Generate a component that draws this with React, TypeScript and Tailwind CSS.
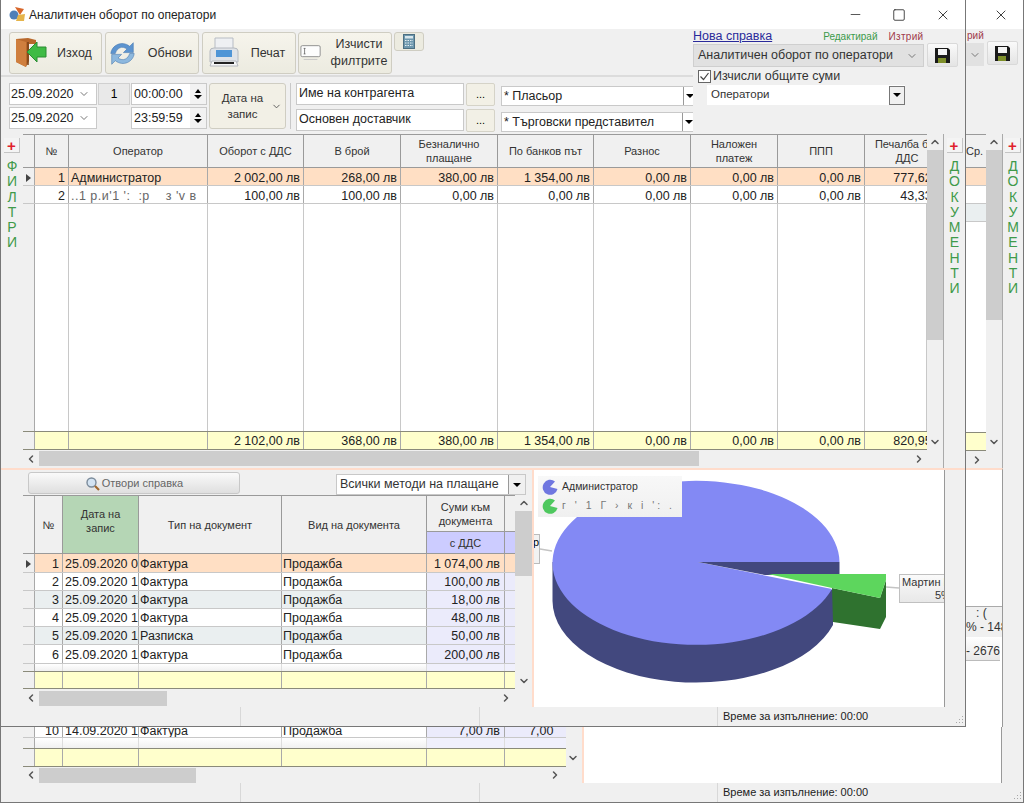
import { ChevronDown, ChevronLeft, ChevronRight, ChevronUp, Minus, Square, X } from "lucide-react";
import type { ReactNode } from "react";

const topCols = "grid grid-cols-[12px_34px_139px_96px_97px_97px_96px_97px_87px_87px_62px]";
const lowCols = "grid grid-cols-[12px_28px_76px_143px_145px_78px_10px]";
const backCols = "grid grid-cols-[12px_28px_76px_143px_145px_78px_61px]";

const topHeaders = ["Оборот с ДДС", "В брой", "Безналично плащане", "По банков път", "Разнос", "Наложен платеж", "ППП"];

const topRows = [
  { n: 1, name: "Администратор", vals: ["2 002,00 лв", "268,00 лв", "380,00 лв", "1 354,00 лв", "0,00 лв", "0,00 лв", "0,00 лв"], last: "777,62 лв" },
  { n: 2, name: "..1 р.и'1 ':  :р    з 'v в", vals: ["100,00 лв", "100,00 лв", "0,00 лв", "0,00 лв", "0,00 лв", "0,00 лв", "0,00 лв"], last: "43,33 лв" },
];
const topTotals = ["2 102,00 лв", "368,00 лв", "380,00 лв", "1 354,00 лв", "0,00 лв", "0,00 лв", "0,00 лв"];

const docRows = [
  { n: 1, date: "25.09.2020 00:00", type: "Фактура", sum: "1 074,00 лв" },
  { n: 2, date: "25.09.2020 10:12", type: "Фактура", sum: "100,00 лв" },
  { n: 3, date: "25.09.2020 11:05", type: "Фактура", sum: "18,00 лв" },
  { n: 4, date: "25.09.2020 12:40", type: "Фактура", sum: "48,00 лв" },
  { n: 5, date: "25.09.2020 14:21", type: "Разписка", sum: "50,00 лв" },
  { n: 6, date: "25.09.2020 16:33", type: "Фактура", sum: "200,00 лв" },
];

function Tri() {
  return <span className="block w-0 h-0 border-x-[4px] border-t-[4px] border-x-transparent border-t-black" />;
}

function Cell({ className = "", children }: { className?: string; children?: ReactNode }) {
  return (
    <div className={`h-full min-w-0 overflow-hidden whitespace-nowrap flex items-center border-r border-[#a9a9a9] ${className}`}>
      {children}
    </div>
  );
}

function HeadCell({ className = "", children }: { className?: string; children?: ReactNode }) {
  return (
    <div className={`h-full min-w-0 overflow-hidden flex items-center justify-center text-center text-[11px] leading-[14px] text-[#333] border-r border-[#9a9a9a] px-1 ${className}`}>
      {children}
    </div>
  );
}

function Letters({ word }: { word: string }) {
  return (
    <div className="flex flex-col items-center text-[14px] leading-[15.3px] text-[#3f9a4a] mt-[6px]">
      {word.split("").map((c, i) => (
        <span key={i}>{c}</span>
      ))}
    </div>
  );
}

function SideStrip({ word, className = "" }: { word: string; className?: string }) {
  return (
    <div className={`flex flex-col items-center bg-[#f0f0f0] pt-[4px] ${className}`}>
      <div className="w-[16px] h-[15px] flex items-center justify-center bg-[#f4f4f4] border-b border-r border-[#c4c4c4] text-[#e0202c] text-[15px] leading-none font-bold">
        +
      </div>
      <Letters word={word} />
    </div>
  );
}

function VScroll({ thumb, className = "" }: { thumb: string; className?: string }) {
  return (
    <div className={`w-[16px] shrink-0 flex flex-col items-center bg-[#f0f0f0] relative ${className}`}>
      <ChevronUp size={12} strokeWidth={3} className="text-[#555] mt-[2px]" />
      <div className={`w-full bg-[#cdcdcd] mt-[2px] ${thumb}`} />
      <div className="flex-1" />
      <ChevronDown size={12} strokeWidth={3} className="text-[#555] mb-[2px]" />
    </div>
  );
}

function HScroll({ thumb, className = "" }: { thumb: string; className?: string }) {
  return (
    <div className={`flex items-center bg-[#f0f0f0] ${className}`}>
      <ChevronLeft size={12} strokeWidth={3} className="text-[#555] mx-[2px] shrink-0" />
      <div className={`h-[15px] bg-[#cdcdcd] shrink-0 ${thumb}`} />
      <div className="flex-1" />
      <ChevronRight size={12} strokeWidth={3} className="text-[#555] mx-[2px] shrink-0" />
    </div>
  );
}

function StatusBar() {
  return (
    <div className="h-[19px] flex bg-[#f0f0f0] text-[11px] text-[#222] shrink-0">
      <div className="w-[240px] border-r border-[#d8d8d8]" />
      <div className="w-[239px] border-r border-[#d8d8d8]" />
      <div className="w-[238px] border-r border-[#d8d8d8]" />
      <div className="flex-1 flex items-center pl-[5px] justify-between">
        <span>Време за изпълнение: 00:00</span>
        <svg width="10" height="10" viewBox="0 0 10 10" className="self-end mr-[1px] mb-[1px]">
          <path d="M8 1h1v1H8zM5 4h1v1H5zM8 4h1v1H8zM2 7h1v1H2zM5 7h1v1H5zM8 7h1v1H8z" fill="#a8a8a8" />
        </svg>
      </div>
    </div>
  );
}

function DoorIcon() {
  return (
    <svg width="34" height="32" viewBox="0 0 34 32">
      <path d="M2 2 L14 1 L22 3 L22 7 L15 7 L15 24 L12 30 L2 25 Z" fill="#b8682c" />
      <path d="M2 2 L12 5 L12 30 L2 25 Z" fill="#cf7f3e" />
      <path d="M14 5 L14 28" stroke="#7a4015" strokeWidth="1.5" />
      <path d="M13 15 L23 5 L23 10 L32 10 L32 20 L23 20 L23 25 Z" fill="#3fbb45" stroke="#2b8c33" strokeWidth="1" />
    </svg>
  );
}

function RefreshIcon() {
  return (
    <svg width="27" height="27" viewBox="0 0 30 30">
      <path d="M2 15 C3 6 14 0 23 7 L27 3 L27 14 L16 14 L20 10 C14 6 9 9 7 15 Z" fill="#5d94cf" stroke="#3f74ad" strokeWidth="0.6" />
      <path d="M28 15 C27 24 16 30 7 23 L3 27 L3 16 L14 16 L10 20 C16 24 21 21 23 15 Z" fill="#8db8de" stroke="#3f74ad" strokeWidth="0.6" />
    </svg>
  );
}

function PrinterIcon() {
  return (
    <svg width="32" height="32" viewBox="0 0 32 32">
      <path d="M7 1 H25 V13 H7 Z" fill="#eef0f3" stroke="#b7bcc4" />
      <path d="M2 14 Q2 11 6 11 H26 Q30 11 30 14 V25 H2 Z" fill="#dfe3e8" stroke="#b4b8be" />
      <path d="M8 13 H24 V20 H8 Z" fill="#4f95d6" />
      <path d="M4 24 H28 L30 29 H2 Z" fill="#f5f6f7" stroke="#b4b8be" />
      <path d="M6 25 H26 V27 H6 Z" fill="#222" />
    </svg>
  );
}

function ClearIcon() {
  return (
    <svg width="22" height="20" viewBox="0 0 24 20">
      <rect x="1" y="2" width="21" height="12" rx="1.5" fill="#fdfdfd" stroke="#8a8a8a" />
      <path d="M5 5 V11 M4 5 H6 M4 11 H6" stroke="#555" strokeWidth="0.8" />
      <path d="M4 17 H19" stroke="#c4c4c4" />
    </svg>
  );
}

function CalcIcon() {
  return (
    <svg width="12" height="15" viewBox="0 0 12 15">
      <rect x="0.5" y="0.5" width="11" height="14" fill="#6d97ad" stroke="#4d6f82" />
      <rect x="2" y="2" width="8" height="2.5" fill="#d8e6ec" />
      <path d="M2 6.5 H10 M2 9 H10 M2 11.5 H10" stroke="#e4edf1" strokeWidth="1" strokeDasharray="1.5 1" />
    </svg>
  );
}

function SaveButton({ className = "" }: { className?: string }) {
  return (
    <div className={`h-[24px] flex items-center justify-center rounded-[2px] border border-[#d9d9d9] bg-gradient-to-b from-[#fafafa] to-[#e4e4e4] ${className}`}>
      <svg width="15" height="15" viewBox="0 0 15 15">
        <path d="M0 0 H13 L15 2 V15 H0 Z" fill="#1a1a1a" />
        <rect x="3" y="1" width="9" height="6" fill="#f4f4f4" />
        <rect x="3" y="10" width="8" height="5" fill="#7e8f2a" />
      </svg>
    </div>
  );
}

function ToolButton({ icon, label, iconBox, labelBox = "", className = "" }: { icon: ReactNode; label: ReactNode; iconBox: string; labelBox?: string; className?: string }) {
  return (
    <div className={`h-[42px] shrink-0 flex items-center rounded-[3px] border border-[#cfcdc2] bg-gradient-to-b from-[#f6f4ec] to-[#ecebe0] text-[12.5px] text-[#333] ${className}`}>
      <div className={`shrink-0 flex items-center justify-center ${iconBox}`}>{icon}</div>
      <div className={`flex-1 text-center leading-[17px] whitespace-nowrap ${labelBox}`}>{label}</div>
    </div>
  );
}

function Field({ className = "", children }: { className?: string; children?: ReactNode }) {
  return (
    <div className={`shrink-0 bg-white border border-[#c9c9c9] flex items-center text-[12.5px] text-[#222] whitespace-nowrap overflow-hidden ${className}`}>
      {children}
    </div>
  );
}

function DateRow({ date, time, num }: { date: string; time: string; num?: string }) {
  return (
    <div className="flex h-[22px]">
      <Field className="w-[88px] pl-[1px] justify-between pr-[6px]">
        {date}
        <ChevronDown size={12} className="text-[#777]" />
      </Field>
      <div className={`w-[32px] shrink-0 ml-[1px] text-center text-[12px] leading-[21px] ${num ? "bg-[#e9e9e9] border border-[#d0d0d0]" : ""}`}>{num}</div>
      <Field className="w-[76px] ml-[1px] pl-[2px] justify-between">
        {time}
        <div className="w-[16px] h-full flex flex-col items-center justify-center gap-[2px] bg-[#f2f2f2]">
          <span className="w-0 h-0 border-x-[3px] border-b-[4px] border-x-transparent border-b-black" />
          <Tri />
        </div>
      </Field>
    </div>
  );
}

function FilterBar() {
  return (
    <div className="flex pl-[8px] pt-[6px] h-[59px] border-t-2 border-[#dcdcdc]">
      <div className="flex flex-col gap-[2px] shrink-0">
        <DateRow date="25.09.2020" time="00:00:00" num="1" />
        <DateRow date="25.09.2020" time="23:59:59" />
      </div>
      <div className="w-[77px] h-[46px] shrink-0 ml-[2px] flex items-center rounded-[3px] border border-[#cfcdc2] bg-[#f2f0e6] text-[11.5px] leading-[16px] text-[#333]">
        <span className="flex-1 text-center pl-[4px]">Дата на запис</span>
        <ChevronDown size={11} className="text-[#555] mr-[3px] shrink-0" />
      </div>
      <div className="w-px h-[46px] shrink-0 bg-[#c8c8c8] ml-[4px]" />
      <div className="flex flex-col ml-[5px] gap-[3px] shrink-0">
        <div className="flex">
          <Field className="w-[168px] h-[22px] pl-[2px] pb-[2px]">Име на контрагента</Field>
          <div className="w-[29px] h-[23px] ml-[2px] rounded-[2px] bg-[#f2f0e6] border border-[#d5d3c8] text-center text-[11px] leading-[20px]">...</div>
        </div>
        <div className="flex">
          <Field className="w-[168px] h-[22px] pl-[2px] pb-[2px]">Основен доставчик</Field>
          <div className="w-[29px] h-[23px] ml-[2px] rounded-[2px] bg-[#f2f0e6] border border-[#d5d3c8] text-center text-[11px] leading-[20px]">...</div>
        </div>
      </div>
      <div className="flex flex-col ml-[6px] pt-[3px] gap-[6px] shrink-0">
        <Field className="w-[196px] h-[20px] pl-[2px] justify-between">
          * Пласьор
          <span className="w-[12px] h-full flex items-center justify-center border-l border-[#999] shrink-0 mr-[1px]"><Tri /></span>
        </Field>
        <Field className="w-[196px] h-[20px] pl-[2px] justify-between">
          * Търговски представител
          <span className="w-[12px] h-full flex items-center justify-center border-l border-[#999] shrink-0 mr-[2px]"><Tri /></span>
        </Field>
      </div>
    </div>
  );
}

function ReportPanel() {
  return (
    <div className="w-[272px] shrink-0 bg-[#f0f0f0] relative z-10">
      <div className="flex items-baseline h-[14px] leading-[14px]">
        <span className="text-[12.5px] text-[#2a2a9a] underline">Нова справка</span>
        <span className="ml-[51px] text-[10px] text-[#3c9a4a]">Редактирай</span>
        <span className="ml-[11px] text-[10px] tracking-[0.3px] text-[#a03a4a]">Изтрий</span>
      </div>
      <div className="flex items-start">
        <div className="w-[231px] h-[23px] mt-[1px] flex items-center justify-between pl-[4px] pr-[5px] bg-[#e1e1e1] border border-[#cfcfcf] text-[12.5px] text-[#333]">
          Аналитичен оборот по оператори
          <ChevronDown size={12} className="text-[#777]" />
        </div>
        <SaveButton className="w-[31px] ml-[3px]" />
      </div>
      <div className="flex items-center ml-[5px] mt-[2px] h-[15px] text-[12.5px] text-[#333]">
        <svg width="13" height="13" viewBox="0 0 13 13" className="mr-[2px]">
          <rect x="0.5" y="0.5" width="12" height="12" fill="#fff" stroke="#666" />
          <path d="M2.5 6.5 L5.5 9.5 L10.5 3" fill="none" stroke="#444" strokeWidth="1.2" />
        </svg>
        Изчисли общите суми
      </div>
      <div className="ml-[14px] mt-[1px] w-[198px] h-[20px] bg-white flex items-center justify-between pl-[4px] text-[11.5px] text-[#333]">
        Оператори
        <span className="w-[16px] h-[19px] flex items-center justify-center border border-[#777] bg-[#f0f0f0]"><Tri /></span>
      </div>
    </div>
  );
}

function TopTable() {
  return (
    <div className="w-[904px] h-[316px] flex flex-col text-[12.5px] text-[#222] shrink-0">
      <div className={`${topCols} h-[34px] bg-[#f0f0f0] border-y border-[#9a9a9a]`}>
        <HeadCell />
        <HeadCell>№</HeadCell>
        <HeadCell>Оператор</HeadCell>
        {topHeaders.map((h) => (
          <HeadCell key={h}>{h}</HeadCell>
        ))}
        <HeadCell className="border-r-0 justify-start !px-0">
          <span className="block w-[84px] shrink-0">Печалба без<br />ДДС</span>
        </HeadCell>
      </div>
      {topRows.map((r) => (
        <div key={r.n} className={`${topCols} h-[18px] border-b border-[#c8c8c8] [&>div]:pt-[3px] ${r.n === 1 ? "bg-[#ffdfc4]" : "bg-white"}`}>
          <Cell className="bg-[#f0f0f0] justify-center">{r.n === 1 && <span className="w-0 h-0 border-y-[4px] border-l-[5px] border-y-transparent border-l-[#444]" />}</Cell>
          <Cell className="justify-end pr-[3px]">{r.n}</Cell>
          <Cell className={`pl-[2px] whitespace-pre ${r.n === 2 ? "tracking-[0.5px] text-[#666]" : ""}`}>{r.name}</Cell>
          {r.vals.map((v, i) => (
            <Cell key={i} className="justify-end pr-[3px]">{v}</Cell>
          ))}
          <div className="overflow-hidden flex items-center">
            <span className="block w-[87px] shrink-0 text-right pr-[3px]">{r.last}</span>
          </div>
        </div>
      ))}
      <div className={`${topCols} flex-1 bg-white`}>
        <Cell className="bg-[#f0f0f0]" />
        {[0, 1, 2, 3, 4, 5, 6, 7, 8, 9].map((i) => (
          <Cell key={i} className="border-[#c8c8c8]" />
        ))}
      </div>
      <div className={`${topCols} h-[19px] bg-[#ffffcc] border-y border-[#8a8a7a] [&>div]:pt-[1px]`}>
        <Cell className="bg-[#f0f0f0]" />
        <Cell />
        <Cell />
        {topTotals.map((v, i) => (
          <Cell key={i} className="justify-end pr-[3px]">{v}</Cell>
        ))}
        <div className="overflow-hidden flex items-center">
          <span className="block w-[87px] shrink-0 text-right pr-[3px]">820,95 лв</span>
        </div>
      </div>
    </div>
  );
}

function DocTable() {
  return (
    <div className="w-[492px] flex flex-col text-[12.5px] text-[#222] shrink-0 h-[194px]">
      <div className={`${lowCols} h-[59px] shrink-0 bg-[#f0f0f0] border-y border-[#9a9a9a]`}>
        <HeadCell />
        <HeadCell>№</HeadCell>
        <HeadCell className="bg-[#b5d6b5] pb-[8px]">Дата на запис</HeadCell>
        <HeadCell>Тип на документ</HeadCell>
        <HeadCell>Вид на документа</HeadCell>
        <div className="flex flex-col h-full border-r border-[#9a9a9a]">
          <div className="h-[36px] flex items-center justify-center text-center text-[11px] leading-[14px] text-[#333] border-b border-[#9a9a9a]">Суми към документа</div>
          <div className="flex-1 flex items-center justify-center text-[11px] text-[#333] bg-[#ccccff]">с ДДС</div>
        </div>
        <div className="flex flex-col h-full">
          <div className="h-[36px] border-b border-[#9a9a9a]" />
          <div className="flex-1 bg-[#ccccff]" />
        </div>
      </div>
      {docRows.map((r) => (
        <div
          key={r.n}
          className={`${lowCols} h-[18.2px] shrink-0 border-b border-[#c8c8c8] [&>div]:pt-[2px] ${r.n === 1 ? "bg-[#ffdfc4]" : r.n % 2 === 0 ? "bg-white" : "bg-[#eaeff0]"}`}
        >
          <Cell className="bg-[#f0f0f0] justify-center">{r.n === 1 && <span className="w-0 h-0 border-y-[4px] border-l-[5px] border-y-transparent border-l-[#444]" />}</Cell>
          <Cell className="justify-end pr-[3px]">{r.n}</Cell>
          <Cell className="pl-[2px]">{r.date}</Cell>
          <Cell className="pl-[1px]">{r.type}</Cell>
          <Cell className="pl-[1px]">Продажба</Cell>
          <Cell className={`justify-end pr-[4px] ${r.n === 1 ? "" : "bg-[#ebebfb]"}`}>{r.sum}</Cell>
          <div className={r.n === 1 ? "" : "bg-[#ebebfb]"} />
        </div>
      ))}
      <div className={`${lowCols} flex-1 min-h-0 bg-gradient-to-b from-white to-[#f0f0f0]`}>
        <Cell className="bg-[#f0f0f0]" />
        <Cell className="border-[#ddd]" />
        <Cell className="border-[#ddd]" />
        <Cell className="border-[#ddd]" />
        <Cell className="border-[#ddd]" />
        <Cell className="border-[#ddd] bg-[#f0f0fc]" />
        <div className="bg-[#f0f0fc]" />
      </div>
      <div className={`${lowCols} h-[18px] shrink-0 bg-[#ffffcc] border-y border-[#8a8a7a]`}>
        <Cell className="bg-[#f0f0f0]" />
        <Cell />
        <Cell />
        <Cell />
        <Cell />
        <Cell />
        <div />
      </div>
    </div>
  );
}

function PieChart() {
  return (
    <div className="relative w-[412px] shrink-0 bg-white overflow-hidden border-l-2 border-[#ffdccb]">
      <svg width="412" height="238" viewBox="532 470 412 238" className="absolute left-[-2px] top-0">
        <path d="M540 549 L552 551 M886 587 L899 588" stroke="#c4c4c4" strokeWidth="1.5" />
        <path d="M552.5 562 L552.5 601 A143.5 82 0 0 0 833 625 L833 590 Z" fill="#42487e" />
        <path d="M839.5 562 A143.5 82 0 1 0 832 589 L698 562 Z" fill="#8389f4" />
        <path d="M698 562 L839.5 562 L839.5 575 L765 575 Z" fill="#42487e" />
        <path d="M832 588 L880 598 L886 580 L886 617 L880 629 L833 622 Z" fill="#2f722f" />
        <path d="M768 574 L886 574 L886 580 L880 598 L832 588 Z" fill="#5dd65d" />
      </svg>
      <div className="absolute left-[4px] top-[6px] w-[144px] h-[41px] bg-gradient-to-b from-[#f8f8f8] to-[#f0f0f0] flex flex-col pl-[4px] text-[10.5px] text-[#333]">
        <div className="flex items-center h-[19px] mt-[1px] gap-[4px]">
          <svg width="16" height="16" viewBox="0 0 16 16"><path d="M8 8 L13 2.5 A7.5 7.5 0 1 0 15.5 10 Z" fill="#7077e0" /></svg>
          Администратор
        </div>
        <div className="flex items-center h-[19px] gap-[4px]">
          <svg width="16" height="16" viewBox="0 0 16 16"><path d="M8 8 L13 2.5 A7.5 7.5 0 1 0 15.5 10 Z" fill="#4fc85f" /></svg>
          <span className="tracking-[3px] text-[#777]">{"г  ' 1 Г › к i ':  ."}</span>
        </div>
      </div>
      <div className="absolute left-[-1px] top-[64px] w-[7px] h-[30px] bg-[#f2f2f2] border border-[#bbb] border-l-0 text-[11px] leading-[14px]">р</div>
      <div className="absolute left-[365px] top-[104px] w-[60px] h-[29px] bg-gradient-to-b from-[#fafafa] to-[#e8e8e8] border border-[#c0c0c0] text-[11px] leading-[13px] text-[#333] px-[2px] pt-[1px]">
        <div className="whitespace-nowrap">Мартин Георгиев</div>
        <div className="pl-[33px]">5%</div>
      </div>
    </div>
  );
}

function FrontWindow() {
  return (
    <div className="absolute left-0 top-0 w-[966px] h-[727px] flex flex-col bg-[#f0f0f0] border-x border-b border-[#777] overflow-hidden">
      <div className="h-[29px] shrink-0 flex items-center bg-white text-[12px] text-[#222]">
        <svg width="17" height="17" viewBox="0 0 17 17" className="ml-[8px] mr-[3px]">
          <circle cx="5" cy="9" r="4.5" fill="#4f7fb8" />
          <path d="M6 1 L15 3 L11 9 Z" fill="#d8662a" />
          <path d="M9 9 L16 8 L15 15 L7 15 Z" fill="#e5b44a" />
        </svg>
        Аналитичен оборот по оператори
        <div className="flex-1" />
        <Minus size={15} strokeWidth={1.3} className="mr-[29px] text-[#333]" />
        <Square size={14} strokeWidth={1.4} className="mr-[29px] text-[#222]" />
        <X size={16} strokeWidth={1.3} className="mr-[14px] text-[#222]" />
      </div>

      <div className="h-[105px] shrink-0 flex">
        <div className="w-[692px] shrink-0 flex flex-col">
          <div className="h-[46px] flex items-start pl-[8px] pt-[3px]">
            <ToolButton className="w-[93px]" iconBox="w-[42px]" labelBox="pr-[4px]" icon={<DoorIcon />} label="Изход" />
            <ToolButton className="w-[94px] ml-[3px]" iconBox="w-[33px]" labelBox="pl-[3px]" icon={<RefreshIcon />} label="Обнови" />
            <ToolButton className="w-[94px] ml-[3px]" iconBox="w-[41px]" labelBox="pr-[3px]" icon={<PrinterIcon />} label="Печат" />
            <ToolButton className="w-[94px] ml-[2px]" iconBox="w-[24px]" labelBox="pl-[4px]" icon={<ClearIcon />} label={<>Изчисти<br />филтрите</>} />
            <div className="w-[30px] h-[19px] ml-[2px] shrink-0 flex items-center justify-center rounded-[3px] border border-[#cfcdc2] bg-[#ecebe0]">
              <CalcIcon />
            </div>
          </div>
          <FilterBar />
        </div>
        <ReportPanel />
      </div>

      <div className="h-[336px] shrink-0 flex border-b-2 border-[#ffdccb]">
        <SideStrip word="ФИЛТРИ" className="w-[22px] shrink-0" />
        <div className="w-[920px] shrink-0 flex flex-col">
          <div className="flex">
            <TopTable />
            <VScroll thumb="h-[190px]" />
          </div>
          <HScroll thumb="w-[660px]" className="h-[17px] w-[904px]" />
        </div>
        <SideStrip word="ДОКУМЕНТИ" className="flex-1 border-l border-[#aaa]" />
      </div>

      <div className="flex-1 flex min-h-0">
        <div className="w-[22px] shrink-0 bg-[#f0f0f0]" />
        <div className="w-[509px] shrink-0 flex flex-col">
          <div className="h-[26px] flex items-start pt-[2px] relative">
            <div className="ml-[5px] w-[212px] h-[22px] rounded-[3px] border border-[#c8c8c8] bg-gradient-to-b from-[#fafafa] to-[#dfdfdf] flex items-center justify-center gap-[2px] text-[11px] text-[#666]">
              <svg width="15" height="15" viewBox="0 0 15 15">
                <circle cx="6.5" cy="6.5" r="4.5" fill="#d3e3f2" stroke="#7a8a9a" strokeWidth="1.4" />
                <path d="M10 10 L14 14" stroke="#a0662c" strokeWidth="2.2" />
              </svg>
              Отвори справка
            </div>
            <div className="ml-[96px] mt-[2px] w-[190px] h-[21px] bg-white border border-[#c8c8c8] flex items-center justify-between pl-[3px] text-[12.5px] text-[#333]">
              Всички методи на плащане
              <span className="w-[17px] h-full flex items-center justify-center border-l border-[#999] bg-[#f0f0f0]"><Tri /></span>
            </div>
          </div>
          <div className="flex">
            <DocTable />
            <VScroll thumb="h-[65px] mt-[1px]" className="h-[194px] !w-[17px]" />
          </div>
          <HScroll thumb="w-[128px]" className="h-[18px] w-[491px]" />
        </div>
        <PieChart />
        <div className="flex-1 bg-[#f0f0f0] border-l border-[#999]" />
      </div>

      <StatusBar />
    </div>
  );
}

function BackWindow() {
  return (
    <div className="absolute inset-0 flex flex-col bg-[#f0f0f0] border-x border-b border-[#777]">
      <div className="h-[727px] shrink-0 flex">
        <div className="w-[965px] shrink-0" />
        <div className="flex-1 flex flex-col">
          <div className="h-[29px] shrink-0 bg-white flex items-center justify-end pr-[14px]">
            <X size={16} strokeWidth={1.3} className="text-[#222]" />
          </div>
          <div className="h-[105px] shrink-0 relative">
            <div className="text-[10px] text-[#a03a4a] pl-[1px] leading-[14px]">рий</div>
            <div className="flex items-start">
              <div className="w-[18px] h-[23px] bg-[#e1e1e1] flex items-center justify-center">
                <ChevronDown size={12} className="text-[#777]" />
              </div>
              <SaveButton className="w-[31px] ml-[3px] -mt-[2px]" />
            </div>
          </div>
          <div className="h-[334px] shrink-0 flex">
            <div className="w-[20px] shrink-0 flex flex-col text-[11px] text-[#333]">
              <div className="h-[34px] bg-[#f0f0f0] border-y border-[#9a9a9a] flex items-center">Ср.</div>
              <div className="h-[18px] bg-[#ffdfc4] border-b border-[#c8c8c8]" />
              <div className="h-[18px] bg-white border-b border-[#c8c8c8]" />
              <div className="h-[18px] bg-[#eaeff0] border-b border-[#c8c8c8]" />
              <div className="flex-1 bg-white" />
              <div className="h-[19px] bg-[#ffffcc] border-y border-[#8a8a7a]" />
              <div className="h-[17px] bg-[#f0f0f0] flex items-center pl-[5px]">
                <ChevronRight size={12} strokeWidth={3} className="text-[#555]" />
              </div>
            </div>
            <VScroll thumb="h-[170px]" className="h-[316px]" />
            <SideStrip word="ДОКУМЕНТИ" className="flex-1 border-l border-[#aaa]" />
          </div>
          <div className="flex-1 flex">
            <div className="w-[37px] shrink-0 bg-white border-t-2 border-[#ffdccb] pt-[136px] text-[12px] text-[#333] border-r border-r-[#999]">
              <div className="h-[31px] w-[36px] bg-[#f0f0f0] border-t border-[#aaa] whitespace-nowrap overflow-hidden">
                <div className="h-[13px] leading-[13px] pl-[10px]">: (</div>
                <div className="h-[14px] leading-[14px]">% - 1484</div>
              </div>
              <div className="h-[24px] w-[34px] bg-gradient-to-b from-white to-[#e8e8e8] border-b border-[#bbb] pt-[5px] leading-[18px] whitespace-nowrap overflow-hidden">- 2676</div>
            </div>
            <div className="flex-1" />
          </div>
        </div>
      </div>

      <div className="h-[56px] shrink-0 flex">
        <div className="w-[22px] shrink-0" />
        <div className="w-[543px] shrink-0 flex flex-col text-[12.5px] text-[#222]">
          <div className={`${backCols} h-[11px] bg-white border-b border-[#c8c8c8] items-end`}>
            <Cell className="bg-[#f0f0f0]" />
            <Cell className="justify-end pr-[3px] !items-end leading-[11px]">10</Cell>
            <Cell className="pl-[2px] !items-end leading-[11px]">14.09.2020 10:11</Cell>
            <Cell className="pl-[1px] !items-end leading-[11px]">Фактура</Cell>
            <Cell className="pl-[1px] !items-end leading-[11px]">Продажба</Cell>
            <Cell className="justify-end pr-[4px] bg-[#ebebfb] !items-end leading-[11px]">7,00 лв</Cell>
            <div className="bg-[#ebebfb] pl-[24px] leading-[11px] flex items-end overflow-hidden">7,00</div>
          </div>
          <div className={`${backCols} h-[10px] bg-gradient-to-b from-white to-[#f0f0f0]`}>
            <Cell className="bg-[#f0f0f0]" />
            <Cell className="border-[#ddd]" />
            <Cell className="border-[#ddd]" />
            <Cell className="border-[#ddd]" />
            <Cell className="border-[#ddd]" />
            <Cell className="border-[#ddd] bg-[#f0f0fc]" />
            <div className="bg-[#f0f0fc]" />
          </div>
          <div className={`${backCols} h-[19px] bg-[#ffffcc] border-y border-[#8a8a7a]`}>
            <Cell className="bg-[#f0f0f0]" />
            <Cell />
            <Cell />
            <Cell />
            <Cell />
            <Cell />
            <div />
          </div>
          <HScroll thumb="w-[157px]" className="h-[16px] pr-[3px]" />
        </div>
        <div className="w-[16px] shrink-0 flex flex-col pl-[1px] justify-end pb-[19px]">
          <ChevronDown size={12} strokeWidth={3} className="text-[#555]" />
        </div>
        <div className="w-[420px] shrink-0 bg-white border-l-2 border-[#ffdccb] border-r border-r-[#999]" />
        <div className="flex-1" />
      </div>

      <StatusBar />
    </div>
  );
}

export default function App() {
  return (
    <div className="relative w-[1024px] h-[803px] overflow-hidden bg-white font-['Liberation_Sans',Arial,sans-serif]">
      <BackWindow />
      <FrontWindow />
    </div>
  );
}
